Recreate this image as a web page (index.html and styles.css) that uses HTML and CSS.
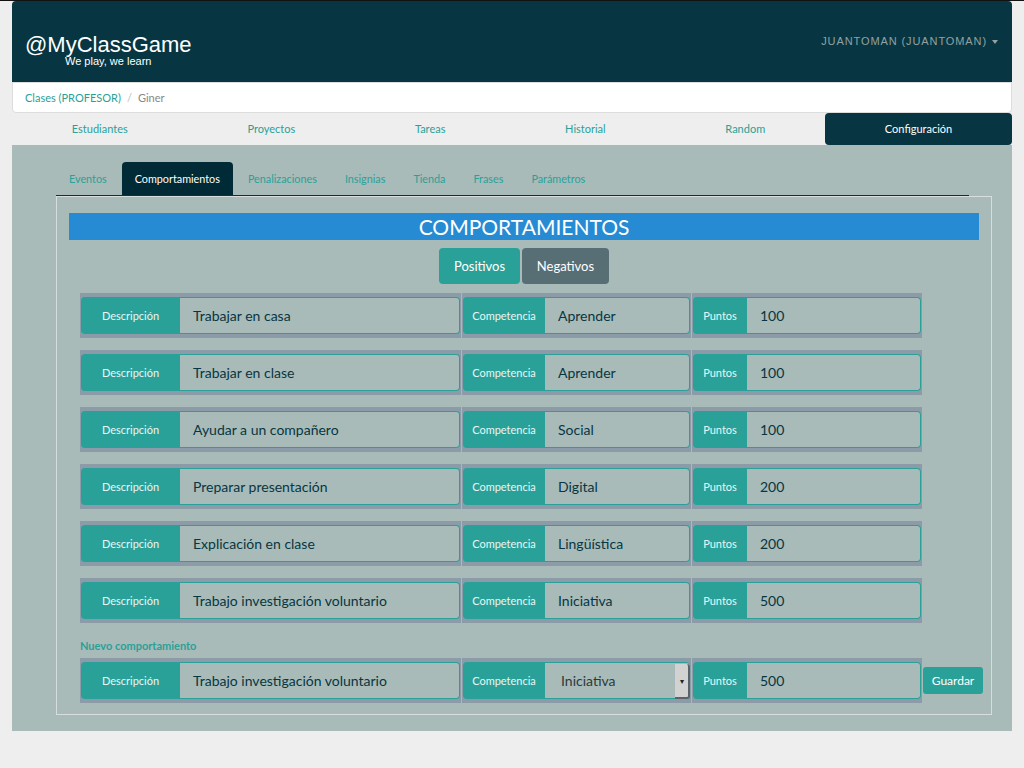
FILE: index.html
```html
<!DOCTYPE html>
<html lang="es">
<head>
<meta charset="utf-8">
<title>MyClassGame</title>
<link rel="stylesheet" href="styles.css">
</head>
<body>
<div class="page">
  <header class="header">
    <div class="brand">
      <div class="brand-title">@MyClassGame</div>
      <div class="brand-tag">We play, we learn</div>
    </div>
    <div class="user">JUANTOMAN (JUANTOMAN) <span class="caret"></span></div>
  </header>
  <div class="breadcrumb"><a class="bc-link">Clases (PROFESOR)</a><span class="bc-sep">/</span><span class="bc-cur">Giner</span></div>
  <nav class="mainnav">
    <a class="mn-item">Estudiantes</a>
    <a class="mn-item">Proyectos</a>
    <a class="mn-item">Tareas</a>
    <a class="mn-item">Historial</a>
    <a class="mn-item">Random</a>
    <a class="mn-item active">Configuración</a>
  </nav>
  <main class="main">
    <ul class="subtabs">
      <li class="st-item">Eventos</li>
      <li class="st-item active">Comportamientos</li>
      <li class="st-item">Penalizaciones</li>
      <li class="st-item">Insignias</li>
      <li class="st-item">Tienda</li>
      <li class="st-item">Frases</li>
      <li class="st-item">Parámetros</li>
    </ul>
    <section class="panel">
      <h1 class="panel-title">COMPORTAMIENTOS</h1>
      <div class="toggle">
        <button class="btn btn-pos">Positivos</button>
        <button class="btn btn-neg">Negativos</button>
      </div>
      <div class="rows">
        <div class="row">
          <div class="cell c1"><div class="ig"><span class="lbl l1">Descripción</span><span class="fld">Trabajar en casa</span></div></div>
          <div class="cell c2"><div class="ig"><span class="lbl l2">Competencia</span><span class="fld">Aprender</span></div></div>
          <div class="cell c3"><div class="ig"><span class="lbl l3">Puntos</span><span class="fld">100</span></div></div>
        </div>
        <div class="row">
          <div class="cell c1"><div class="ig"><span class="lbl l1">Descripción</span><span class="fld">Trabajar en clase</span></div></div>
          <div class="cell c2"><div class="ig"><span class="lbl l2">Competencia</span><span class="fld">Aprender</span></div></div>
          <div class="cell c3"><div class="ig"><span class="lbl l3">Puntos</span><span class="fld">100</span></div></div>
        </div>
        <div class="row">
          <div class="cell c1"><div class="ig"><span class="lbl l1">Descripción</span><span class="fld">Ayudar a un compañero</span></div></div>
          <div class="cell c2"><div class="ig"><span class="lbl l2">Competencia</span><span class="fld">Social</span></div></div>
          <div class="cell c3"><div class="ig"><span class="lbl l3">Puntos</span><span class="fld">100</span></div></div>
        </div>
        <div class="row">
          <div class="cell c1"><div class="ig"><span class="lbl l1">Descripción</span><span class="fld">Preparar presentación</span></div></div>
          <div class="cell c2"><div class="ig"><span class="lbl l2">Competencia</span><span class="fld">Digital</span></div></div>
          <div class="cell c3"><div class="ig"><span class="lbl l3">Puntos</span><span class="fld">200</span></div></div>
        </div>
        <div class="row">
          <div class="cell c1"><div class="ig"><span class="lbl l1">Descripción</span><span class="fld">Explicación en clase</span></div></div>
          <div class="cell c2"><div class="ig"><span class="lbl l2">Competencia</span><span class="fld">Lingüística</span></div></div>
          <div class="cell c3"><div class="ig"><span class="lbl l3">Puntos</span><span class="fld">200</span></div></div>
        </div>
        <div class="row">
          <div class="cell c1"><div class="ig"><span class="lbl l1">Descripción</span><span class="fld">Trabajo investigación voluntario</span></div></div>
          <div class="cell c2"><div class="ig"><span class="lbl l2">Competencia</span><span class="fld">Iniciativa</span></div></div>
          <div class="cell c3"><div class="ig"><span class="lbl l3">Puntos</span><span class="fld">500</span></div></div>
        </div>
      </div>
      <div class="new-label">Nuevo comportamiento</div>
      <div class="row row-new">
        <div class="cell c1"><div class="ig"><span class="lbl l1">Descripción</span><span class="fld">Trabajo investigación voluntario</span></div></div>
        <div class="cell c2"><div class="ig"><span class="lbl l2">Competencia</span><span class="fld fld-select"><span class="sel-text">Iniciativa</span><span class="sel-arrow">▾</span></span></div></div>
        <div class="cell c3"><div class="ig"><span class="lbl l3">Puntos</span><span class="fld">500</span></div></div>
        <button class="btn-save">Guardar</button>
      </div>
    </section>
  </main>
</div>
</body>
</html>
```

FILE: styles.css
```css
html, body {
  margin: 0;
  padding: 0;
}
body {
  background: #eeeeee;
  border-top: 1px solid #111;
  font-family: Lato, "Liberation Sans", Arial, sans-serif;
}
.page {
  width: 1000px;
  margin: 0 auto;
}
.header {
  height: 81px;
  background: #073642;
  border-radius: 4px 4px 0 0;
  display: flex;
  justify-content: space-between;
  padding: 0 14px 0 13px;
  box-sizing: border-box;
}
.brand {
  padding-top: 33px;
  font-family: "Liberation Sans", Arial, sans-serif;
  color: #fff;
}
.brand-title {
  font-size: 22px;
  line-height: 22px;
}
.brand-tag {
  font-size: 11px;
  line-height: 11px;
  margin-left: 40px;
  margin-top: 0;
}
.user {
  font-family: "Liberation Sans", Arial, sans-serif;
  font-size: 11px;
  letter-spacing: 0.9px;
  color: #93a1a1;
  line-height: 81px;
  display: flex;
  align-items: center;
  gap: 5px;
}
.caret {
  width: 0;
  height: 0;
  border-left: 3.5px solid transparent;
  border-right: 3.5px solid transparent;
  border-top: 4px solid #93a1a1;
  margin-top: 1px;
}
.breadcrumb {
  height: 31px;
  box-sizing: border-box;
  background: #fff;
  border: 1px solid #dddddd;
  border-radius: 0 0 4px 4px;
  padding: 0 12px;
  font-size: 11px;
  line-height: 29px;
}
.bc-link { color: #2aa198; }
.bc-sep { color: #bbbbbb; padding: 0 6px; }
.bc-cur { color: #888888; }
.mainnav {
  display: flex;
  height: 32px;
  background: #eeeeee;
}
.mn-item {
  flex: 1 1 auto;
  text-align: center;
  font-size: 11px;
  line-height: 32px;
  color: #2aa198;
}
.mn-item.active {
  background: #073642;
  color: #ffffff;
  border-radius: 4px;
}
.main {
  background: #a8bbb9;
  padding: 17px 20px 16px 44px;
}
.subtabs {
  list-style: none;
  margin: 0 23px 0 0;
  padding: 0;
  display: flex;
  border-bottom: 1px solid #073642;
}
.st-item {
  padding: 0 13px;
  margin-right: 2px;
  font-size: 10.8px;
  line-height: 33px;
  color: #2aa198;
  border-radius: 4px 4px 0 0;
}
.st-item.active {
  background: #002b36;
  color: #ffffff;
}
.panel {
  border: 1px solid #d6dedd;
  padding: 16px 12px 11px 12px;
}
.panel-title {
  margin: 0;
  height: 27px;
  background: #268bd2;
  color: #ffffff;
  font-size: 21px;
  font-weight: normal;
  line-height: 28px;
  text-align: center;
}
.toggle {
  display: flex;
  justify-content: center;
  gap: 2px;
  margin-top: 8px;
}
.btn {
  height: 36px;
  border: 0;
  border-radius: 4px;
  color: #ffffff;
  font-family: Lato, sans-serif;
  font-size: 13px;
  padding: 0;
}
.btn-pos { background: #2aa198; width: 81px; }
.btn-neg { background: #586e75; width: 87px; }
.rows {
  margin-top: 9px;
}
.row {
  display: flex;
  gap: 1px;
  margin-left: 11px;
  margin-bottom: 12px;
}
.cell {
  background: #8c9ba8;
  padding: 4px 1px;
  box-sizing: border-box;
  flex: none;
}
.c1 { width: 381px; }
.c2 { width: 229px; }
.c3 { width: 230px; }
.ig {
  display: flex;
  height: 37px;
}
.lbl {
  background: #2aa198;
  color: #e8f6f4;
  font-size: 11px;
  display: flex;
  align-items: center;
  justify-content: center;
  border-radius: 4px 0 0 4px;
  flex: none;
}
.l1 { width: 99px; }
.l2 { width: 82px; }
.l3 { width: 54px; }
.fld {
  flex: 1;
  background: #a8bbb9;
  border: 1px solid #2aa198;
  border-left: 0;
  border-radius: 0 4px 4px 0;
  padding-left: 13px;
  display: flex;
  align-items: center;
  font-size: 14px;
  color: #073642;
}
.fld-select {
  padding-left: 16px;
  justify-content: space-between;
  border-right: 0;
  color: #2b3a3e;
}
.sel-arrow {
  width: 13px;
  align-self: stretch;
  background: #d2d2d2;
  border-right: 2px solid #5a6468;
  border-bottom: 2px solid #5a6468;
  font-size: 8px;
  color: #222;
  display: flex;
  align-items: center;
  justify-content: center;
  margin: 1px 0 -1px 0;
  border-radius: 0 3px 3px 0;
}
.new-label {
  margin-left: 11px;
  padding-top: 4px;
  line-height: 14px;
  margin-bottom: 5px;
  font-size: 11px;
  font-weight: bold;
  color: #2aa198;
}
.row-new {
  margin-bottom: 0;
  align-items: center;
}
.btn-save {
  flex: none;
  height: 27px;
  width: 60px;
  border: 0;
  border-radius: 3px;
  background: #2aa198;
  color: #ffffff;
  font-family: Lato, sans-serif;
  font-size: 12px;
  padding: 0;
}
```
